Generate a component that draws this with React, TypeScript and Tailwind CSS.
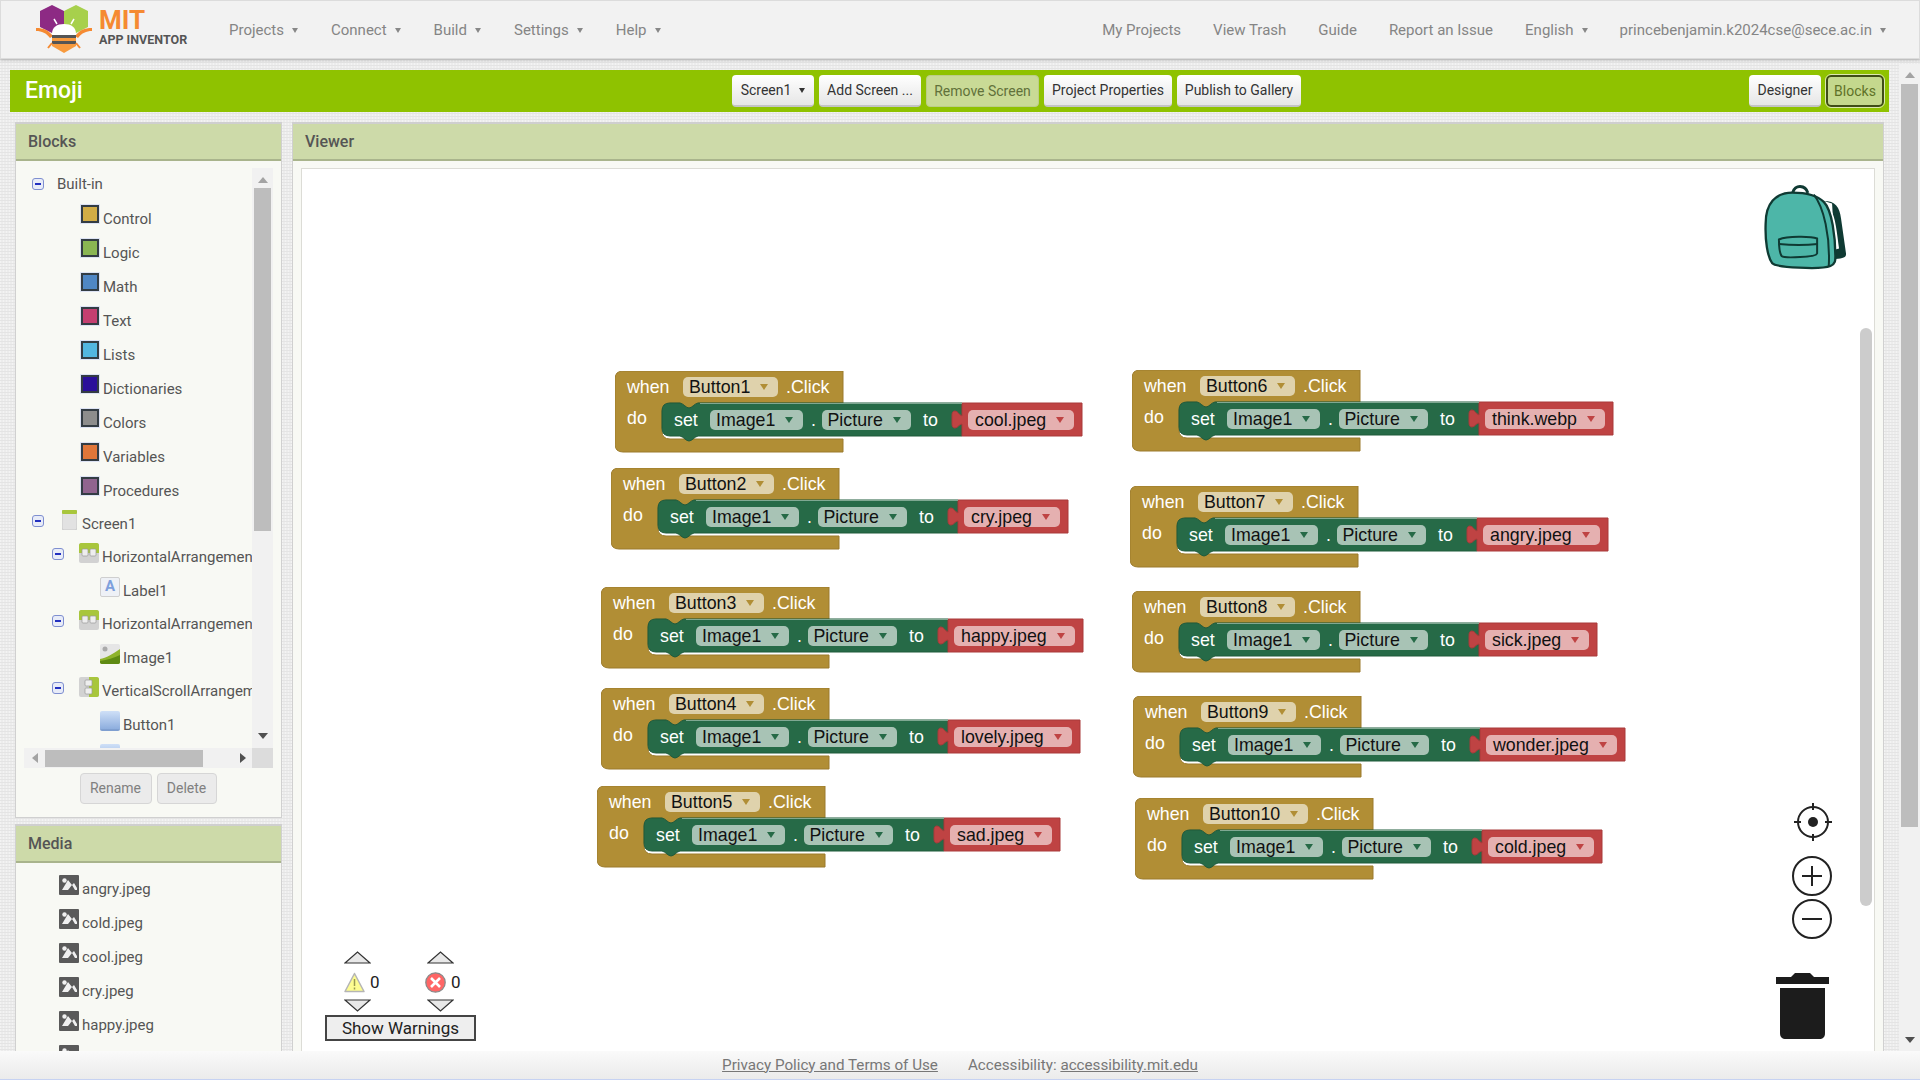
import { ReactNode } from "react";

const LINEN =
  "bg-[#ececec] bg-[repeating-linear-gradient(0deg,#e4e4e4_0px,#e4e4e4_1px,transparent_1px,transparent_3px),repeating-linear-gradient(90deg,#f3f3f3_0px,#f3f3f3_1px,transparent_1px,transparent_3px)]";

const BLOCKS = [
  { x: 615, y: 371, button: "Button1", value: "cool.jpeg", litW: 120 },
  { x: 611, y: 468, button: "Button2", value: "cry.jpeg", litW: 110 },
  { x: 601, y: 587, button: "Button3", value: "happy.jpeg", litW: 135 },
  { x: 601, y: 688, button: "Button4", value: "lovely.jpeg", litW: 132 },
  { x: 597, y: 786, button: "Button5", value: "sad.jpeg", litW: 116 },
  { x: 1132, y: 370, button: "Button6", value: "think.webp", litW: 134 },
  { x: 1130, y: 486, button: "Button7", value: "angry.jpeg", litW: 131 },
  { x: 1132, y: 591, button: "Button8", value: "sick.jpeg", litW: 118 },
  { x: 1133, y: 696, button: "Button9", value: "wonder.jpeg", litW: 145 },
  { x: 1135, y: 798, button: "Button10", value: "cold.jpeg", litW: 120 },
];

function Caret({ className = "fill-[#888]" }: { className?: string }) {
  return (
    <svg width="6" height="5" viewBox="0 0 6 5" className={className}>
      <path d="M0 0H6L3 5Z" />
    </svg>
  );
}

function NavItem({ label, caret }: { label: string; caret?: boolean }) {
  return (
    <div className="flex items-center gap-[8px] text-[15px] text-[#858585]">
      <span>{label}</span>
      {caret && <Caret />}
    </div>
  );
}

function Logo() {
  return (
    <div className="flex items-start w-[228px] h-[59px] pl-[35px]">
      <svg width="58" height="52" viewBox="0 0 58 52" className="mt-[3px] shrink-0">
        <path d="M16 2L28 8V24L16 30L4 24V8Z" fill="#8d2a84" />
        <path d="M40 2L52 8V24L40 30L28 24V8Z" fill="#a7d04c" />
        <path d="M0 25C8 25 12 27 17 33L14 35C10 30 6 28 0 28Z" fill="#f58a32" />
        <path d="M56 25C48 25 44 27 39 33L42 35C46 30 50 28 56 28Z" fill="#f58a32" />
        <path d="M21 21L18 16M35 21L38 16" stroke="#fff" strokeWidth="1.5" />
        <path d="M16 31C16 24 21 21 28 21C35 21 40 24 40 31V32H16Z" fill="#fff" />
        <rect x="16" y="32" width="24" height="3" fill="#555" />
        <rect x="16" y="35" width="24" height="3" fill="#f79a3e" />
        <rect x="16" y="38" width="24" height="3" fill="#555" />
        <path d="M16 41H40V43L28 50L16 43Z" fill="#f79a3e" />
        <path d="M16 40L12 45M40 40L44 45" stroke="#f58a32" strokeWidth="2" />
      </svg>
      <div className="ml-[5px] flex flex-col">
        <span className="mt-[7px] text-[26px] leading-[26px] font-bold text-[#f58a32]">MIT</span>
        <span className="text-[12.5px] leading-[14px] font-bold text-[#555]">APP INVENTOR</span>
      </div>
    </div>
  );
}

function Header() {
  return (
    <header className="flex items-center justify-between h-[59px] shrink-0 bg-[#f2f2f2] border border-[#dcdcdc] shadow-[0_1px_3px_rgba(0,0,0,0.25)] pr-[33px]">
      <div className="flex items-center">
        <Logo />
        <nav className="flex items-center gap-[33px] pt-[1px]">
          <NavItem label="Projects" caret />
          <NavItem label="Connect" caret />
          <NavItem label="Build" caret />
          <NavItem label="Settings" caret />
          <NavItem label="Help" caret />
        </nav>
      </div>
      <nav className="flex items-center gap-[32px] pt-[1px]">
        <NavItem label="My Projects" />
        <NavItem label="View Trash" />
        <NavItem label="Guide" />
        <NavItem label="Report an Issue" />
        <NavItem label="English" caret />
        <NavItem label="princebenjamin.k2024cse@sece.ac.in" caret />
      </nav>
    </header>
  );
}

function ToolButton({ children, width }: { children: ReactNode; width: string }) {
  return (
    <button
      type="button"
      className={`flex items-center justify-center gap-[8px] h-[32px] pt-[1px] rounded-[4px] bg-gradient-to-b from-white to-[#e6e6e6] border-b-2 border-[#c4c4c4] text-[14px] text-[#333] ${width}`}
    >
      {children}
    </button>
  );
}

function Toolbar() {
  return (
    <div className="flex items-center h-[42px] w-[1879px] bg-[#8fc200] pl-[15px] pr-[5px]">
      <h1 className="w-[707px] pt-[1px] text-[23px] font-medium text-white">Emoji</h1>
      <div className="flex gap-[5px]">
        <ToolButton width="w-[82px]">
          Screen1 <Caret className="fill-[#333]" />
        </ToolButton>
        <ToolButton width="w-[102px]">Add Screen ...</ToolButton>
        <button
          type="button"
          className="h-[32px] w-[113px] pt-[1px] rounded-[4px] bg-[#c9da96] border border-[#bccd88] text-[14px] text-[#61713a]"
        >
          Remove Screen
        </button>
        <ToolButton width="w-[128px]">Project Properties</ToolButton>
        <ToolButton width="w-[124px]">Publish to Gallery</ToolButton>
      </div>
      <div className="flex gap-[5px] ml-auto">
        <ToolButton width="w-[72px]">Designer</ToolButton>
        <button
          type="button"
          className="h-[32px] w-[58px] pt-[1px] rounded-[5px] bg-[#c4d88d] border-2 border-[#3f4d17] outline outline-1 outline-[#dbe8ae] text-[14px] text-[#5f7228]"
        >
          Blocks
        </button>
      </div>
    </div>
  );
}

function PanelHeader({ title }: { title: string }) {
  return (
    <div className="flex items-center h-[39px] shrink-0 bg-[#cddaa9] border-t-2 border-t-[#cfcfcf] border-b-2 border-b-[#a9b48c] pl-[12px] text-[16px] font-medium text-[#555]">
      {title}
    </div>
  );
}

function Expander() {
  return (
    <span className="flex items-center justify-center w-[12px] h-[12px] rounded-[3px] border border-[#7f8fd0] bg-[#e8ecf8]">
      <span className="w-[6px] h-[2px] bg-[#2230c0]" />
    </span>
  );
}

function Swatch({ color }: { color: string }) {
  return (
    <span className="block w-[18px] h-[18px] mb-[10px] mr-[4px] shrink-0 outline outline-1 outline-[#dde3f4] border-2 border-[#333c44]" style={{ backgroundColor: color }} />
  );
}

function CategoryRow({ label, color }: { label: string; color: string }) {
  return (
    <div className="flex items-center h-[34px] pl-[57px]">
      <Swatch color={color} />
      <span>{label}</span>
    </div>
  );
}

function ArrangementIcon({ vertical }: { vertical?: boolean }) {
  return (
    <svg width="20" height="20" viewBox="0 0 20 20" className="mb-[8px] mr-[3px] shrink-0">
      <rect x="0" y="0" width="20" height="20" rx="2" fill="#d2d2d2" />
      {vertical ? (
        <>
          <path d="M10 0H18C19 0 20 1 20 2V18C20 19 19 20 18 20H10Z" fill="#a8c63c" />
          <rect x="6" y="3" width="7" height="6" rx="1" fill="#eee" stroke="#999" strokeWidth="0.7" />
          <rect x="6" y="11" width="7" height="6" rx="1" fill="#eee" stroke="#999" strokeWidth="0.7" />
        </>
      ) : (
        <>
          <path d="M0 10V2C0 1 1 0 2 0H18C19 0 20 1 20 2V10Z" fill="#a8c63c" />
          <rect x="3" y="6" width="6" height="7" rx="1" fill="#eee" stroke="#999" strokeWidth="0.7" />
          <rect x="11" y="6" width="6" height="7" rx="1" fill="#eee" stroke="#999" strokeWidth="0.7" />
        </>
      )}
    </svg>
  );
}

function LeafIcon({ kind }: { kind: "label" | "image" | "button" }) {
  if (kind === "label") {
    return (
      <span className="flex items-center justify-center w-[20px] h-[20px] mb-[8px] mr-[3px] shrink-0 rounded-[2px] bg-[#eef1f6] border border-[#cfcfcf] text-[15px] font-bold leading-none text-[#7d9fdc]">
        A
      </span>
    );
  }
  if (kind === "image") {
    return (
      <svg width="20" height="20" viewBox="0 0 20 20" className="mb-[8px] mr-[3px] shrink-0">
        <rect width="20" height="20" rx="2" fill="#e6e6e6" />
        <circle cx="5" cy="5" r="2.5" fill="#aaa" />
        <path d="M0 15C6 14 13 10 20 5V18C20 19 19 20 18 20H2C1 20 0 19 0 18Z" fill="#8eb32b" />
        <path d="M0 17C7 16 14 14 20 11V18C20 19 19 20 18 20H2C1 20 0 19 0 18Z" fill="#5e8a12" />
      </svg>
    );
  }
  return (
    <span className="block w-[20px] h-[20px] mb-[8px] mr-[3px] shrink-0 rounded-[2px] bg-gradient-to-b from-[#cfe0f7] to-[#8eaede] border-b-2 border-[#7f9fd0]" />
  );
}

function TreeRow({ depth, expander, icon, label }: { depth: number; expander?: boolean; icon: ReactNode; label: string }) {
  const pad = depth === 1 ? "pl-[28px]" : "pl-[76px] pt-[1px]";
  return (
    <div className={`flex items-center h-[33.5px] ${pad} whitespace-nowrap`}>
      {expander && (
        <span className="w-[27px] mb-[6px] shrink-0">
          <Expander />
        </span>
      )}
      {icon}
      <span>{label}</span>
    </div>
  );
}

function BlocksTree() {
  return (
    <div className="mx-[8px] mt-[7px]">
      <div className="flex h-[580px] text-[15px] text-[#555]">
        <div className="w-[229px] overflow-hidden">
          <div className="flex items-center h-[34px] pb-[2px] pl-[8px]">
            <span className="w-[25px]">
              <Expander />
            </span>
            <span>Built-in</span>
          </div>
          <CategoryRow label="Control" color="#d1ac46" />
          <CategoryRow label="Logic" color="#8ab653" />
          <CategoryRow label="Math" color="#4f86c4" />
          <CategoryRow label="Text" color="#c43f71" />
          <CategoryRow label="Lists" color="#52b6e0" />
          <CategoryRow label="Dictionaries" color="#2a0f9a" />
          <CategoryRow label="Colors" color="#8d8d8d" />
          <CategoryRow label="Variables" color="#e0763a" />
          <CategoryRow label="Procedures" color="#90648f" />
          <div className="flex items-center h-[32px] pl-[8px] whitespace-nowrap">
            <span className="w-[30px] mb-[6px]">
              <Expander />
            </span>
            <svg width="15" height="20" viewBox="0 0 15 20" className="mb-[8px] mr-[5px] shrink-0">
              <rect width="15" height="20" rx="2" fill="#e2e2e2" stroke="#c8c8c8" />
              <rect width="15" height="4" rx="1" fill="#a8c63c" />
            </svg>
            <span>Screen1</span>
          </div>
          <TreeRow depth={1} expander icon={<ArrangementIcon />} label="HorizontalArrangement1" />
          <TreeRow depth={2} icon={<LeafIcon kind="label" />} label="Label1" />
          <TreeRow depth={1} expander icon={<ArrangementIcon />} label="HorizontalArrangement2" />
          <TreeRow depth={2} icon={<LeafIcon kind="image" />} label="Image1" />
          <TreeRow depth={1} expander icon={<ArrangementIcon vertical />} label="VerticalScrollArrangement1" />
          <TreeRow depth={2} icon={<LeafIcon kind="button" />} label="Button1" />
          <TreeRow depth={2} icon={<LeafIcon kind="button" />} label="Button2" />
        </div>
        <div className="flex flex-col items-center w-[21px] bg-[#f1f1f1]">
          <svg width="10" height="6" viewBox="0 0 10 6" className="mt-[9px] fill-[#a3a3a3]">
            <path d="M0 6L5 0L10 6Z" />
          </svg>
          <div className="mt-[5px] w-[17px] h-[343px] bg-[#bdbdbd]" />
          <svg width="10" height="6" viewBox="0 0 10 6" className="mt-[202px] fill-[#505050]">
            <path d="M0 0L5 6L10 0Z" />
          </svg>
        </div>
      </div>
      <div className="flex h-[20px]">
        <div className="flex items-center w-[229px] bg-[#f1f1f1]">
          <svg width="6" height="10" viewBox="0 0 6 10" className="ml-[8px] fill-[#a3a3a3]">
            <path d="M6 0L0 5L6 10Z" />
          </svg>
          <div className="ml-[7px] w-[158px] h-[17px] bg-[#bdbdbd]" />
          <svg width="6" height="10" viewBox="0 0 6 10" className="ml-[37px] fill-[#505050]">
            <path d="M0 0L6 5L0 10Z" />
          </svg>
        </div>
        <div className="w-[21px] bg-[#dcdcdc]" />
      </div>
    </div>
  );
}

function MediaIcon() {
  return (
    <svg width="20" height="20" viewBox="0 0 20 20" className="mb-[8px] mr-[3px] shrink-0">
      <rect width="20" height="20" rx="1" fill="#5a5a5a" />
      <circle cx="5.5" cy="5.5" r="2.2" fill="#f0f0f0" />
      <path d="M3 15L9 5L13 10L15 8L18 13V15Z" fill="#f0f0f0" />
      <path d="M9 15L13 10L16 15Z" fill="#5a5a5a" />
    </svg>
  );
}

function MediaRow({ label }: { label: string }) {
  return (
    <div className="flex items-center h-[34px] pl-[43px]">
      <MediaIcon />
      <span>{label}</span>
    </div>
  );
}

function LeftColumn() {
  return (
    <div className="flex flex-col w-[267px] h-[929px] shrink-0">
      <section className="h-[696px] shrink-0 bg-[#f8f9f4] border-x border-b border-[#d0d0d0]">
        <PanelHeader title="Blocks" />
        <BlocksTree />
        <div className="flex justify-center gap-[5px] mt-[5px] pr-[1px]">
          <button type="button" className="w-[72px] h-[31px] rounded-[4px] bg-[#ebebeb] border border-[#d6d6d6] text-[14px] text-[#808080]">
            Rename
          </button>
          <button type="button" className="w-[60px] h-[31px] rounded-[4px] bg-[#ebebeb] border border-[#d6d6d6] text-[14px] text-[#808080]">
            Delete
          </button>
        </div>
      </section>
      <section className="flex-1 mt-[6px] overflow-hidden bg-[#f8f9f4] border-x border-[#d0d0d0]">
        <PanelHeader title="Media" />
        <div className="pt-[9px] text-[15px] text-[#555]">
          <MediaRow label="angry.jpeg" />
          <MediaRow label="cold.jpeg" />
          <MediaRow label="cool.jpeg" />
          <MediaRow label="cry.jpeg" />
          <MediaRow label="happy.jpeg" />
          <MediaRow label="lovely.jpeg" />
        </div>
      </section>
    </div>
  );
}

function Pill({ x, y, end, fill, tri }: { x: number; y: number; end: number; fill: string; tri: string }) {
  const cx = end - 14;
  const cy = y + 10;
  return (
    <>
      <rect x={x} y={y} width={end - x} height={20} rx={5} fill={fill} />
      <path d={`M${cx - 4} ${cy - 3}H${cx + 4}L${cx} ${cy + 3}Z`} fill={tri} />
    </>
  );
}

function EventBlock({ x, y, button, value, litW }: { x: number; y: number; button: string; value: string; litW: number }) {
  const wide = button === "Button10";
  const topW = wide ? 238 : 228;
  const btnEnd = wide ? 173 : 163;
  const clickX = wide ? 181 : 171;
  const goldPath = `M8 0H${topW}V32H83C79 33 77 37 74 37C71 37 69 33 65 32H55Q47 32 47 40V60Q47 68 55 68H${topW}V81H8Q0 81 0 73V8Q0 0 8 0Z`;
  const setPath = "M55 32H65C69 33 71 37 74 37C77 37 79 33 83 32H347V65H83C79 66 77 70 74 70C71 70 69 66 65 65H55Q47 65 47 57V40Q47 32 55 32Z";
  const litPath = `M347 32H${347 + litW}V65H347V53C344 53 343 57 340 57C337 57 337 54 337 52V45C337 43 337 40 340 40C343 40 344 44 347 45Z`;
  return (
    <svg
      width={347 + litW + 2}
      height="84"
      className="absolute font-['Liberation_Sans',sans-serif] text-[17.8px]"
      style={{ left: x - 302, top: y - 169 }}
    >
      <path d={goldPath} fill="#b18e35" stroke="#9b7b2c" strokeWidth="1" />
      <path d={setPath} fill="#266a47" stroke="#1f5a3b" strokeWidth="1" />
      <path d={litPath} fill="#bf4343" stroke="#a93a3a" strokeWidth="1" />
      <path d="M85 32.5H347" stroke="#7fa892" strokeWidth="1" />
      <text x="12" y="22" fill="#fff">when</text>
      <Pill x={68} y={6} end={btnEnd} fill="#dfd2ac" tri="#b18e35" />
      <text x="74" y="22" fill="#111">{button}</text>
      <text x={clickX} y="22" fill="#fff">.Click</text>
      <text x="12" y="53" fill="#fff">do</text>
      <text x="59" y="55" fill="#fff">set</text>
      <Pill x={95} y={39} end={188} fill="#a8c3b5" tri="#266a47" />
      <text x="101" y="55" fill="#111">Image1</text>
      <text x="196" y="55" fill="#fff">.</text>
      <Pill x={207} y={39} end={296} fill="#a8c3b5" tri="#266a47" />
      <text x="212.5" y="55" fill="#111">Picture</text>
      <text x="308" y="55" fill="#fff">to</text>
      <Pill x={353} y={39} end={347 + litW - 8} fill="#e5b0b0" tri="#bf4343" />
      <text x="360" y="55" fill="#111">{value}</text>
    </svg>
  );
}

function Backpack() {
  return (
    <svg width="87" height="88" viewBox="125 68 260 265" className="absolute left-[1460px] top-[14px]">
      <path d="M310 122C345 122 358 140 362 175L377 280C378 292 370 295 345 297L335 130Z" fill="#0f3a33" />
      <path d="M332 150C345 170 350 220 356 265L345 268C342 220 338 180 325 150Z" fill="#fff" />
      <path
        d="M215 97C165 97 135 130 135 190C133 240 140 290 155 310C165 322 300 330 330 318C345 312 345 300 345 290C345 230 335 150 310 125C290 105 260 97 215 97Z"
        fill="#4db6a8"
        stroke="#0f3a33"
        strokeWidth="7"
      />
      <path d="M280 103C310 140 330 230 325 320" fill="none" stroke="#0f3a33" strokeWidth="6" />
      <path d="M217 96C222 72 255 72 262 98" fill="none" stroke="#0f3a33" strokeWidth="9" />
      <path d="M175 238C200 228 270 228 290 235L290 280C288 292 190 295 183 288C178 280 175 260 175 238Z" fill="#4db6a8" stroke="#0f3a33" strokeWidth="6" />
      <path d="M175 252C210 255 260 255 292 252" fill="none" stroke="#0f3a33" strokeWidth="6" />
    </svg>
  );
}

function ArrowTriangle({ down }: { down?: boolean }) {
  return (
    <svg width="27" height="13" viewBox="0 0 27 13" className="block">
      <path d={down ? "M1 1H26L13.5 12Z" : "M1 12H26L13.5 1Z"} fill="#e8e8e8" stroke="#333" strokeWidth="1.2" />
    </svg>
  );
}

function WarningsPanel() {
  return (
    <div className="absolute left-[23px] bottom-[10px] w-[151px] text-[#222]">
      <div className="flex pl-[19px] gap-[56px]">
        <div className="w-[27px]">
          <ArrowTriangle />
          <div className="flex items-center gap-[5px] h-[21px] mt-[8px] mb-[6px] text-[17px]">
            <svg width="21" height="21" viewBox="0 0 21 21" className="shrink-0">
              <path d="M10.5 1.5L20 19.5H1Z" fill="#fdfc91" stroke="#b5b5b5" strokeWidth="1.5" strokeLinejoin="round" />
              <path d="M10.5 7V14M10.5 15.5V17.5" stroke="#9a9a50" strokeWidth="1.5" />
            </svg>
            <span>0</span>
          </div>
          <ArrowTriangle down />
        </div>
        <div className="w-[27px]">
          <ArrowTriangle />
          <div className="flex items-center gap-[5px] h-[21px] mt-[8px] mb-[6px] -ml-[2px] text-[17px]">
            <svg width="21" height="21" viewBox="0 0 21 21" className="shrink-0">
              <circle cx="10.5" cy="10.5" r="9.7" fill="#f66" stroke="#8a8a8a" strokeWidth="1.3" />
              <path d="M6 6L15 15M15 6L6 15" stroke="#fff" strokeWidth="2.6" />
            </svg>
            <span>0</span>
          </div>
          <ArrowTriangle down />
        </div>
      </div>
      <button
        type="button"
        className="mt-[3px] w-[151px] h-[26px] pt-[1px] bg-[#eee] border-2 border-[#444] text-[17px] leading-none text-[#222]"
      >
        Show Warnings
      </button>
    </div>
  );
}

function ViewerControls() {
  return (
    <>
      <svg width="40" height="40" viewBox="0 0 40 40" className="absolute left-[1491px] top-[633px]">
        <circle cx="20" cy="20" r="15" fill="#fff" stroke="#222" strokeWidth="2" />
        <circle cx="20" cy="20" r="5" fill="#222" />
        <path d="M20 1V8M20 32V39M1 20H8M32 20H39" stroke="#222" strokeWidth="2" />
      </svg>
      <svg width="42" height="42" viewBox="0 0 42 42" className="absolute left-[1489px] top-[686px]">
        <circle cx="21" cy="21" r="19" fill="#fff" stroke="#222" strokeWidth="2" />
        <path d="M21 11V31M11 21H31" stroke="#222" strokeWidth="2" />
      </svg>
      <svg width="42" height="42" viewBox="0 0 42 42" className="absolute left-[1489px] top-[729px]">
        <circle cx="21" cy="21" r="19" fill="#fff" stroke="#222" strokeWidth="2" />
        <path d="M11 21H31" stroke="#222" strokeWidth="2" />
      </svg>
      <svg width="53" height="68" viewBox="0 0 53 68" className="absolute left-[1474px] top-[803px] fill-[#1c1c1c]">
        <path d="M0 5H15L19 1H34L38 5H53V12H0Z" />
        <path d="M4 16H49V61C49 65 47 67 43 67H10C6 67 4 65 4 61Z" />
      </svg>
      <div className="absolute right-[2px] top-[159px] w-[12px] h-[578px] rounded-full bg-[#ccc]" />
    </>
  );
}

function Viewer() {
  return (
    <section className="flex flex-col w-[1592px] h-[929px] shrink-0 bg-[#f8f9f4] border-x border-[#d0d0d0]">
      <PanelHeader title="Viewer" />
      <div className="flex-1 min-h-0 ml-[8px] mr-[8px] mt-[7px] bg-white border-x border-t border-[#dcdcd6]">
        <div className="relative h-full overflow-hidden">
          {BLOCKS.map((block) => (
            <EventBlock key={block.button} {...block} />
          ))}
          <Backpack />
          <ViewerControls />
          <WarningsPanel />
        </div>
      </div>
    </section>
  );
}

function PageScrollbar() {
  return (
    <div className="flex flex-col items-center w-[21px] shrink-0 mt-[5px] bg-[#f1f1f1]">
      <svg width="10" height="6" viewBox="0 0 10 6" className="mt-[8px] fill-[#a3a3a3]">
        <path d="M0 6L5 0L10 6Z" />
      </svg>
      <div className="mt-[6px] w-[17px] h-[743px] bg-[#bdbdbd]" />
      <svg width="10" height="6" viewBox="0 0 10 6" className="mt-[210px] fill-[#505050]">
        <path d="M0 0L5 6L10 0Z" />
      </svg>
    </div>
  );
}

function Footer() {
  return (
    <footer className="flex items-center justify-center gap-[30px] h-[29px] shrink-0 bg-gradient-to-b from-[#fafafa] to-[#ebebeb] border-b border-[#c6d2f2] text-[15.2px] text-[#777]">
      <a className="underline">Privacy Policy and Terms of Use</a>
      <span>
        Accessibility: <a className="underline">accessibility.mit.edu</a>
      </span>
    </footer>
  );
}

export default function App() {
  return (
    <div className={`flex flex-col w-[1920px] h-[1080px] overflow-hidden font-['Roboto',sans-serif] ${LINEN}`}>
      <Header />
      <div className="flex flex-1 min-h-0 justify-between">
        <main className="pl-[10px] pt-[11px] min-w-0">
          <Toolbar />
          <div className="flex gap-[10px] pl-[5px] pt-[10px]">
            <LeftColumn />
            <Viewer />
          </div>
        </main>
        <PageScrollbar />
      </div>
      <Footer />
    </div>
  );
}
